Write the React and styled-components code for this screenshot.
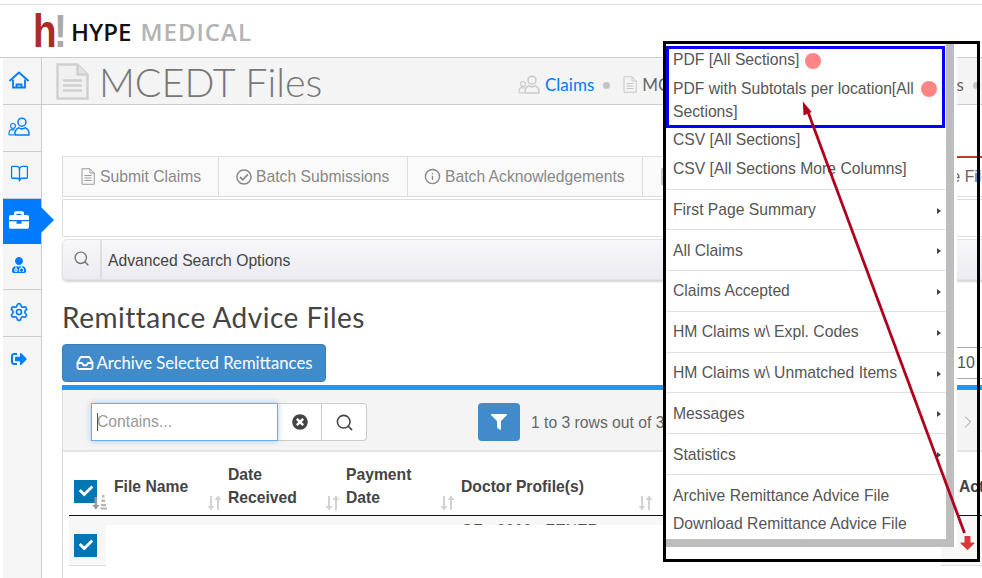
import React from 'react';
import styled, { createGlobalStyle } from 'styled-components';
import {
  FaBriefcase,
  FaUserMd,
  FaSignOutAlt,
  FaRegCheckCircle,
  FaTimesCircle,
  FaFilter,
  FaCheck,
} from 'react-icons/fa';
import { BookOpen, Settings, Search, ChevronRight, Info, Inbox } from 'lucide-react';

const GlobalStyle = createGlobalStyle`
  html, body {
    margin: 0;
    padding: 0;
    height: 578px;
    overflow: hidden;
    background: #fff;
    font-family: "Liberation Sans", Arial, sans-serif;
  }
`;

const Page = styled.div`
  position: relative;
  width: 982px;
  height: 578px;
  overflow: hidden;
  padding: 4px 0 0 3px;
  box-sizing: border-box;
  display: flex;
  flex-direction: column;
`;

const Header = styled.header`
  height: 52px;
  margin-left: -3px;
  padding-left: 33px;
  border-top: 1px solid #ddd;
  border-bottom: 1px solid #ccc;
  display: flex;
  align-items: center;
  flex-shrink: 0;
`;

const LogoMark = styled.span`
  font-family: "Liberation Sans", sans-serif;
  font-weight: 700;
  font-size: 46px;
  line-height: 52px;
  letter-spacing: -3px;
  color: #b02a2a;
  width: 38px;
  display: inline-block;
  transform: scaleX(0.84);
  transform-origin: left center;
  b { color: #a9a9a9; font-weight: 700; }
`;

const LogoText = styled.span`
  font-family: "Open Sans", sans-serif;
  font-size: 24px;
  font-weight: 600;
  letter-spacing: 0;
  color: #111;
  span {
    color: #b3b3b3;
    margin-left: 9px;
    letter-spacing: 1px;
  }
`;

const Body = styled.div`
  display: flex;
  flex: 1;
  min-height: 0;
`;

const Sidebar = styled.nav`
  width: 38px;
  flex-shrink: 0;
  background: #f5f5f5;
  border-right: 1px solid #ccc;
`;

const SideItem = styled.div`
  position: relative;
  height: ${(p) => p.$h || 47}px;
  box-sizing: border-box;
  padding: 0 6px 3px 0;
  display: flex;
  align-items: center;
  justify-content: center;
  color: ${(p) => (p.$active ? '#fff' : '#007bff')};
  background: ${(p) => (p.$active ? '#007bff' : 'transparent')};
  border-bottom: ${(p) => (p.$flat ? '0' : '1px solid #ccc')};
  ${(p) =>
    p.$active &&
    `&::after {
      content: '';
      position: absolute;
      left: 100%;
      top: 8px;
      border-left: 13px solid #007bff;
      border-top: 13px solid transparent;
      border-bottom: 13px solid transparent;
    }`}
`;

const Main = styled.main`
  flex: 1;
  min-width: 0;
`;

const TitleBar = styled.div`
  height: 46px;
  background: #f4f4f4;
  border-bottom: 1px solid #ccc;
  display: flex;
  align-items: center;
  padding-left: 14px;
  white-space: nowrap;
  > * { flex-shrink: 0; }
`;

const PageTitle = styled.h1`
  margin: 0 0 0 10px;
  width: 419px;
  font-family: Lato, sans-serif;
  font-weight: 300;
  font-size: 39.5px;
  color: #777;
`;

const Crumb = styled.span`
  display: inline-flex;
  align-items: center;
  gap: 5px;
  margin-top: 7px;
  font-family: Lato, sans-serif;
  font-size: 17px;
  color: ${(p) => p.$color || '#666'};
`;

const CrumbDot = styled.i`
  width: 7px;
  height: 7px;
  border-radius: 50%;
  background: #c4c4c4;
  margin: 9px 13px 0 9px;
`;

const Content = styled.div`
  padding: 51px 0 0 20px;
  width: 1000px;
`;

const Tabs = styled.div`
  display: flex;
  height: 41px;
  box-sizing: border-box;
  border: 1px solid #ddd;
  background: #fafafa;
`;

const Tab = styled.div`
  width: ${(p) => p.$w}px;
  flex-shrink: 0;
  box-sizing: border-box;
  display: flex;
  align-items: center;
  gap: ${(p) => p.$gap || 5}px;
  padding-left: ${(p) => p.$pad || 18}px;
  font-size: 15.7px;
  color: ${(p) => (p.$active ? '#666' : '#888')};
  background: ${(p) => (p.$active ? '#fff' : 'transparent')};
  border-right: 1px solid #ddd;
  border-top: ${(p) => (p.$active ? '2px solid #c0392b' : '0')};
  margin-top: ${(p) => (p.$active ? '-1px' : '0')};
  white-space: nowrap;
`;

const BlankBox = styled.div`
  height: 38px;
  margin-top: 2px;
  box-sizing: border-box;
  border: 1px solid #ddd;
  background: #fff;
`;

const SearchBar = styled.div`
  height: 41px;
  margin-top: 2px;
  box-sizing: border-box;
  display: flex;
  border: 1px solid #e4e4e8;
  border-radius: 5px;
  background: linear-gradient(#f7f7f9, #ecebf3);
  box-shadow: 0 2px 2px #d5d5d5;
  font-size: 15.7px;
  color: #444;
`;

const SearchIconCell = styled.div`
  width: 37px;
  padding-bottom: 3px;
  display: flex;
  align-items: center;
  justify-content: center;
  color: #777;
  border-right: 2px solid #ddd;
`;

const SearchLabel = styled.div`
  padding-left: 6px;
  line-height: 41px;
`;

const SectionTitle = styled.h2`
  margin: 19px 0 0;
  font-family: Lato, sans-serif;
  font-weight: 400;
  font-size: 28px;
  line-height: 36px;
  letter-spacing: 0.5px;
  color: #444;
`;

const ActionRow = styled.div`
  display: flex;
  align-items: center;
  margin-top: 9px;
  height: 38px;
`;

const ArchiveButton = styled.button`
  width: 264px;
  height: 38px;
  border: 1px solid #3a7fb8;
  border-radius: 4px;
  background: #428bca;
  color: #fff;
  font-family: Lato, sans-serif;
  font-size: 16.7px;
  display: flex;
  align-items: center;
  justify-content: center;
  gap: 3px;
  padding: 0;
`;

const PageSize = styled.div`
  margin-left: 631px;
  width: 60px;
  height: 32px;
  box-sizing: border-box;
  border-top: 1px solid #aaa;
  border-bottom: 1px solid #aaa;
  font-size: 16px;
  line-height: 30px;
  color: #555;
`;

const BlueBar = styled.div`
  height: 5px;
  margin-top: 3px;
  background: #2196f3;
`;

const Panel = styled.section`
  border-left: 1px solid #ddd;
  height: 200px;
`;

const Toolbar = styled.div`
  height: 62px;
  box-sizing: border-box;
  padding: 4px 0 0 28px;
  background: #f4f4f4;
  border-bottom: 2px solid #e5e5e5;
  display: flex;
  align-items: center;
`;

const InputBox = styled.div`
  position: relative;
  width: 187px;
  height: 38px;
  box-sizing: border-box;
  border: 1px solid #66afe9;
  background: #fff;
  box-shadow: 0 0 6px rgba(102, 175, 233, 0.6);
  z-index: 1;
  &::before {
    content: '';
    position: absolute;
    left: 5px;
    top: 9px;
    height: 18px;
    width: 1px;
    background: #555;
  }
`;

const FilterInput = styled.input`
  width: 100%;
  height: 100%;
  box-sizing: border-box;
  border: 0;
  outline: 0;
  padding: 0 5px;
  background: transparent;
  font-family: "Liberation Sans", sans-serif;
  font-size: 15.7px;
  &::placeholder { color: #999; }
`;

const ClearButton = styled.div`
  width: 44px;
  height: 38px;
  box-sizing: border-box;
  display: flex;
  align-items: center;
  justify-content: center;
  background: #fff;
  color: #444;
  border: 1px solid #ccc;
  border-left: 0;
`;

const GoButton = styled(ClearButton)`
  width: 45px;
  border-radius: 0 4px 4px 0;
`;

const FilterButton = styled.div`
  width: 42px;
  height: 38px;
  margin-left: 111px;
  border-radius: 4px;
  background: #428bca;
  color: #fff;
  display: flex;
  align-items: center;
  justify-content: center;
`;

const RowCount = styled.div`
  margin-left: 11px;
  width: 400px;
  padding-top: 1px;
  font-size: 15.7px;
  color: #666;
  white-space: nowrap;
`;

const PagerNext = styled.div`
  margin-left: 27px;
  color: #999;
  display: flex;
`;

const HeadRow = styled.div`
  margin-left: 6px;
  height: 64px;
  box-sizing: border-box;
  display: grid;
  grid-template-columns: 45px 114px 118px 115px 198px 300px 60px;
  border-bottom: 1px solid #111;
`;

const HeadCell = styled.div`
  position: relative;
  display: flex;
  align-items: center;
  padding: 5px 30px 0 0;
  font-size: 15.7px;
  font-weight: 700;
  line-height: 23px;
  color: #444;
`;

const SortSlot = styled.span`
  position: absolute;
  right: 6px;
  bottom: 4px;
  display: flex;
`;

const CheckBox = styled.span`
  width: 23px;
  height: 23px;
  background: #0077b3;
  color: #fff;
  display: flex;
  align-items: center;
  justify-content: center;
  flex-shrink: 0;
`;

const HeadCheck = styled.div`
  position: relative;
  display: flex;
  align-items: center;
  padding: 15px 0 0 5px;
`;

const SortAmountSlot = styled.span`
  position: absolute;
  left: 23px;
  bottom: 5px;
  display: flex;
`;

const RowStrip = styled.div`
  margin-left: 6px;
  height: 9px;
  overflow: hidden;
  background: #f7f7f7;
  padding: 7px 0 0 392px;
  box-sizing: border-box;
  font-size: 15.7px;
  line-height: 16px;
  color: #555;
  white-space: nowrap;
`;

const RowBody = styled.div`
  margin-left: 6px;
  display: flex;
  height: 41px;
`;

const RowCheckCell = styled.div`
  width: 37px;
  box-sizing: border-box;
  background: #f7f7f7;
  border-bottom: 1px solid #ddd;
  padding: 0 0 0 5px;
  display: flex;
  align-items: center;
`;

const RowActionCell = styled(RowCheckCell)`
  width: 60px;
  margin-left: 835px;
  padding: 0 0 5px 19px;
`;

const Frame = styled.div`
  position: absolute;
  left: 663px;
  top: 41px;
  width: 317px;
  height: 521px;
  box-sizing: border-box;
  border: 3px solid #000;
`;

const MenuShell = styled.div`
  position: absolute;
  left: 0;
  top: 0;
  padding-right: 3px;
  background: #fff;
`;

const MenuShadow = styled.div`
  background: #bdbdbd;
  padding: 0 8px 8px 0;
`;

const Menu = styled.ul`
  list-style: none;
  margin: 0;
  padding: 0;
  width: 280px;
  background: #fff;
  font-size: 15.7px;
  line-height: 23px;
  color: #555;
`;

const MenuGroup = styled.div`
  padding: ${(p) => p.$pad};
  border-bottom: ${(p) => (p.$last ? '0' : '1px solid #e2e2e2')};
`;

const PlainItem = styled.li`
  padding: 3px 7px 2.5px;
`;

const SubItem = styled.li`
  position: relative;
  padding: 8.4px 7px;
  border-bottom: 1px solid #e2e2e2;
  &::after {
    content: '';
    position: absolute;
    right: 5px;
    top: 18px;
    border-left: 4px solid #444;
    border-top: 3.5px solid transparent;
    border-bottom: 3.5px solid transparent;
  }
`;

const Highlight = styled.div`
  position: absolute;
  left: 666px;
  top: 46px;
  width: 279px;
  height: 82px;
  box-sizing: border-box;
  border: 3px solid #0000ff;
`;

const Dot = styled.span`
  position: absolute;
  left: ${(p) => p.$x - 8}px;
  top: ${(p) => p.$y - 8}px;
  width: 16px;
  height: 16px;
  border-radius: 50%;
  background: #ff8585;
`;

const ArrowLayer = styled.svg`
  position: absolute;
  left: 0;
  top: 0;
  pointer-events: none;
`;

const HomeIcon = () => (
  <svg width="20" height="18" viewBox="0 0 20 18" fill="none" stroke="currentColor" strokeWidth="1.8">
    <path d="M1 9.5 10 1.5l9 8" strokeLinejoin="round" strokeLinecap="round" />
    <path d="M4 8.5v8h12v-8M7.5 16.5v-3h5v3" />
  </svg>
);

const UsersIcon = ({ size = 22, color = 'currentColor' }) => (
  <svg width={size} height={size * 0.86} viewBox="0 0 22 19" fill="none" stroke={color} strokeWidth="1.5">
    <circle cx="14" cy="5.2" r="4" />
    <path d="M7 18v-2.2c0-2.6 2.4-4.6 4-5 1.6 1.2 4.4 1.2 6 0 1.6.4 4 2.4 4 5V18z" strokeLinejoin="round" />
    <circle cx="5" cy="9" r="2.4" strokeWidth="1.1" />
    <path d="M1 18v-2c0-1.5 1-3 2.5-3.4 1 .6 2 .6 3 0" strokeWidth="1.1" />
    <path d="M1 18h5" strokeWidth="1.1" />
  </svg>
);

const DocIcon = ({ w = 14, h = 17, color = '#999', sw = 1 }) => (
  <svg width={w} height={h} viewBox="0 0 28 34" fill="none" stroke={color} strokeWidth={sw * 2}>
    <path d="M2 1.5h16l8.5 8.5v22.5H2z" />
    <path d="M18 1.5V10h8.5M7 15h14M7 20h14M7 25h14" />
  </svg>
);

const TitleDoc = () => (
  <svg width="33" height="37" viewBox="0 0 33 37" fill="#f0f0f0" stroke="#cfcfcf" strokeWidth="2.4">
    <path d="M1.5 1.5h20l10 10v24h-30z" />
    <path d="M21.5 1.5v10h10" fill="#e2e2e2" />
    <path d="M7 17.5h19M7 22.5h19M7 27.5h19" />
  </svg>
);

const SortArrows = () => (
  <svg width="15" height="16" viewBox="0 0 15 16" fill="#d2d2d2">
    <path d="M3 1h2v10h2.4L4 15.5.6 11H3zM10 15h2V5h2.4L11 .5 7.6 5H10z" />
  </svg>
);

const SortAmount = () => (
  <svg width="16" height="16" viewBox="0 0 16 16" fill="#b5b5b5">
    <path d="M2.5 3h2.6v8h2.4l-3.7 4.5L.2 11h2.3z" fill="#999" />
    <path d="M10 1h2.5v2.5H10zM9.5 5.5H13V8H9.5zM9 10h5v2.2H9zM8.5 13.5H15V15.5H8.5z" />
  </svg>
);

const DownloadArrow = () => (
  <svg width="15" height="14" viewBox="0 0 15 14" fill="#d9373c">
    <path d="M4.5 .5a.5.5 0 0 1 .5-.5h5a.5.5 0 0 1 .5.5V6.5h3.5a.6.6 0 0 1 .4 1L7.9 13.7a.6.6 0 0 1-.8 0L.6 7.5a.6.6 0 0 1 .4-1h3.5z" />
  </svg>
);

const submenuItems = [
  'First Page Summary',
  'All Claims',
  'Claims Accepted',
  'HM Claims w\\ Expl. Codes',
  'HM Claims w\\ Unmatched Items',
  'Messages',
  'Statistics',
];

const columns = [
  { label: 'File Name' },
  { label: 'Date Received' },
  { label: 'Payment Date' },
  { label: 'Doctor Profile(s)' },
  { label: '' },
];

export default function App() {
  return (
    <Page>
      <GlobalStyle />
      <Header>
        <LogoMark>h<b>!</b></LogoMark>
        <LogoText>HYPE<span>MEDICAL</span></LogoText>
      </Header>
      <Body>
        <Sidebar>
          <SideItem><HomeIcon /></SideItem>
          <SideItem><UsersIcon /></SideItem>
          <SideItem><BookOpen size={19} strokeWidth={1.6} /></SideItem>
          <SideItem $active $flat $h={45}><FaBriefcase size={20} /></SideItem>
          <SideItem $h={46}><FaUserMd size={16} /></SideItem>
          <SideItem><Settings size={20} strokeWidth={2} /></SideItem>
          <SideItem $flat><FaSignOutAlt size={16} /></SideItem>
        </Sidebar>
        <Main>
          <TitleBar>
            <TitleDoc />
            <PageTitle>MCEDT Files</PageTitle>
            <Crumb $color="#007bff"><UsersIcon color="#c8c8c8" />Claims</Crumb>
            <CrumbDot />
            <Crumb><DocIcon color="#c8c8c8" />MCEDT Files</Crumb>
            <CrumbDot />
            <Crumb><DocIcon color="#c8c8c8" />Remittance Advice Files</Crumb>
            <CrumbDot />
          </TitleBar>
          <Content>
            <Tabs>
              <Tab $w={156}><DocIcon />Submit Claims</Tab>
              <Tab $w={189} $pad={17} $gap={4}><FaRegCheckCircle size={16} />Batch Submissions</Tab>
              <Tab $w={235} $pad={16} $gap={4}><Info size={17} />Batch Acknowledgements</Tab>
              <Tab $w={203}><DocIcon />Claim Reports</Tab>
              <Tab $w={215} $active $pad={16}><DocIcon />Remittance Files</Tab>
            </Tabs>
            <BlankBox />
            <SearchBar>
              <SearchIconCell><Search size={17} strokeWidth={2} /></SearchIconCell>
              <SearchLabel>Advanced Search Options</SearchLabel>
            </SearchBar>
            <SectionTitle>Remittance Advice Files</SectionTitle>
            <ActionRow>
              <ArchiveButton><Inbox size={18} strokeWidth={2.4} />Archive Selected Remittances</ArchiveButton>
              <PageSize>10</PageSize>
            </ActionRow>
            <BlueBar />
            <Panel>
              <Toolbar>
                <InputBox><FilterInput placeholder="Contains..." /></InputBox>
                <ClearButton><FaTimesCircle size={16} /></ClearButton>
                <GoButton><Search size={19} strokeWidth={2} /></GoButton>
                <FilterButton><FaFilter size={16} /></FilterButton>
                <RowCount>1 to 3 rows out of 3</RowCount>
                <PagerNext><ChevronRight size={20} strokeWidth={1.2} /></PagerNext>
              </Toolbar>
              <HeadRow>
                <HeadCheck>
                  <CheckBox><FaCheck size={14} /></CheckBox>
                  <SortAmountSlot><SortAmount /></SortAmountSlot>
                </HeadCheck>
                {columns.map((c) => (
                  <HeadCell key={c.label}>
                    {c.label}
                    <SortSlot><SortArrows /></SortSlot>
                  </HeadCell>
                ))}
                <HeadCell>Actions</HeadCell>
              </HeadRow>
              <RowStrip>OZ - 0000 - ZENER</RowStrip>
              <RowBody>
                <RowCheckCell><CheckBox><FaCheck size={14} /></CheckBox></RowCheckCell>
                <RowActionCell><DownloadArrow /></RowActionCell>
              </RowBody>
            </Panel>
          </Content>
        </Main>
      </Body>

      <Frame>
        <MenuShell>
          <MenuShadow>
            <Menu>
              <MenuGroup $pad="1px 0 6.5px">
                <PlainItem>PDF [All Sections]</PlainItem>
                <PlainItem>PDF with Subtotals per location[All Sections]</PlainItem>
                <PlainItem>CSV [All Sections]</PlainItem>
                <PlainItem>CSV [All Sections More Columns]</PlainItem>
              </MenuGroup>
              {submenuItems.map((label) => (
                <SubItem key={label}>{label}</SubItem>
              ))}
              <MenuGroup $pad="6px 0 1px" $last>
                <PlainItem>Archive Remittance Advice File</PlainItem>
                <PlainItem>Download Remittance Advice File</PlainItem>
              </MenuGroup>
            </Menu>
          </MenuShadow>
        </MenuShell>
      </Frame>
      <Highlight />
      <Dot $x={813} $y={61} />
      <Dot $x={929} $y={89} />
      <ArrowLayer width="982" height="578" viewBox="0 0 982 578">
        <path d="M964.5 533 808 112" stroke="#b0001e" strokeWidth="2.8" fill="none" />
        <path d="M802.8 101.5 811.7 112 803.5 115.5z" fill="#b0001e" />
      </ArrowLayer>
    </Page>
  );
}
